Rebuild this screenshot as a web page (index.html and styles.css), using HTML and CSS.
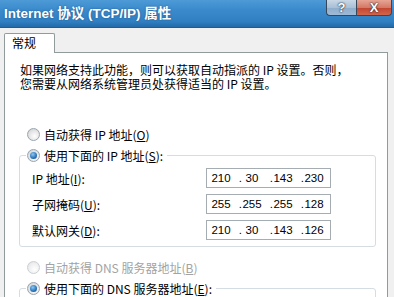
FILE: index.html
```html
<!DOCTYPE html>
<html lang="zh-CN">
<head>
<meta charset="utf-8">
<title>Internet 协议 (TCP/IP) 属性</title>
<link rel="stylesheet" href="styles.css">
</head>
<body>
<div class="window">
  <div class="titlebar">
    <span class="title">Internet 协议 (TCP/IP) 属性</span>
    <div class="caption-btns">
      <span class="cbtn help">?</span>
      <span class="cbtn close">X</span>
    </div>
  </div>
  <div class="client">
    <div class="tabs"><div class="tab">常规</div></div>
    <div class="panel">
      <p class="intro">如果网络支持此功能，则可以获取自动指派的 IP 设置。否则，<br>您需要从网络系统管理员处获得适当的 IP 设置。</p>
      <div class="radio-row first"><span class="radio"></span><span>自动获得 IP 地址(<u>O</u>)</span></div>
      <fieldset class="group">
        <legend><span class="radio-row"><span class="radio checked"></span><span>使用下面的 IP 地址(<u>S</u>):</span></span></legend>
        <div class="rows">
          <div class="field-row"><span class="lbl">IP 地址(<u>I</u>):</span>
            <div class="ipbox"><span class="seg">210</span><span class="dot">.</span><span class="seg">30</span><span class="dot">.</span><span class="seg">143</span><span class="dot">.</span><span class="seg">230</span></div></div>
          <div class="field-row"><span class="lbl">子网掩码(<u>U</u>):</span>
            <div class="ipbox"><span class="seg">255</span><span class="dot">.</span><span class="seg">255</span><span class="dot">.</span><span class="seg">255</span><span class="dot">.</span><span class="seg">128</span></div></div>
          <div class="field-row"><span class="lbl">默认网关(<u>D</u>):</span>
            <div class="ipbox"><span class="seg">210</span><span class="dot">.</span><span class="seg">30</span><span class="dot">.</span><span class="seg">143</span><span class="dot">.</span><span class="seg">126</span></div></div>
        </div>
      </fieldset>
      <div class="radio-row second disabled"><span class="radio"></span><span>自动获得 DNS 服务器地址(<u>B</u>)</span></div>
      <fieldset class="group dns">
        <legend><span class="radio-row"><span class="radio checked"></span><span>使用下面的 DNS 服务器地址(<u>E</u>):</span></span></legend>
      </fieldset>
    </div>
  </div>
</div>
</body>
</html>
```

FILE: styles.css
```css
html, body {
  margin: 0;
  padding: 0;
}
body {
  background: #f0f0f0;
  font-family: "Noto Sans CJK SC", "Liberation Sans", sans-serif;
  font-size: 12px;
  color: #000;
  overflow: hidden;
}
.window {
  width: 394px;
  height: 297px;
  overflow: hidden;
}
.titlebar {
  height: 28px;
  display: flex;
  align-items: flex-start;
  background: linear-gradient(#4d9ad6 0%, #3b8bcc 35%, #2f7fc2 80%, #236aa8 100%);
  border-bottom: 1px solid #1d5d96;
  box-sizing: border-box;
}
.title {
  padding-left: 4px;
  line-height: 27px;
  font-family: "Liberation Sans", "Noto Sans CJK SC", sans-serif;
  font-weight: bold;
  font-size: 13.5px;
  color: #fff;
  text-shadow: 0 0 2px rgba(0, 30, 70, 0.45);
  white-space: nowrap;
}
.caption-btns {
  margin-left: auto;
  margin-right: 2px;
  display: flex;
}
.cbtn {
  height: 16px;
  box-sizing: border-box;
  border: 1px solid #37475a;
  border-top: none;
  display: flex;
  align-items: center;
  justify-content: center;
  font-family: "Liberation Sans", sans-serif;
  font-weight: bold;
  font-size: 13px;
  color: #fff;
  text-shadow: 0 0 1px #1e2a38, 0 0 2px #1e2a38;
}
.help {
  width: 30px;
  border-right: none;
  border-radius: 0 0 0 4px;
  background: linear-gradient(#c9d8e6, #a9c0d6 50%, #8eaccb 51%, #9fbad6);
}
.close {
  width: 36px;
  border-radius: 0 0 4px 0;
  background: linear-gradient(#e7a593, #d47a66 50%, #c1452f 51%, #d2654c);
}
.client {
  padding: 5px 6px 0 4px;
}
.tabs {
  display: flex;
}
.tab {
  position: relative;
  z-index: 1;
  width: 51px;
  height: 20px;
  box-sizing: border-box;
  margin-bottom: -1px;
  border: 1px solid #919b9c;
  border-bottom: none;
  border-radius: 2px 2px 0 0;
  background: #fff;
  padding-left: 7px;
  line-height: 18px;
}
.panel {
  border: 1px solid #919b9c;
  background: #fff;
  min-height: 300px;
}
.intro {
  margin: 10px 0 0 15px;
  line-height: 14px;
  white-space: nowrap;
}
.radio-row {
  display: flex;
  align-items: center;
  gap: 4px;
  height: 21px;
  white-space: nowrap;
}
.radio-row.first {
  margin-top: 33px;
  padding-left: 22px;
}
.radio-row.second {
  margin-top: 10px;
  padding-left: 22px;
}
.radio-row.disabled {
  color: #a3a3a3;
}
.radio {
  width: 13px;
  height: 13px;
  box-sizing: border-box;
  border-radius: 50%;
  border: 1px solid #97a5b0;
  background: radial-gradient(circle at 60% 65%, #ffffff 0%, #e4e4e4 55%, #c9c9c9 100%);
  display: flex;
  align-items: center;
  justify-content: center;
  flex: none;
}
.disabled .radio {
  border-color: #c9cfd3;
  background: radial-gradient(circle at 60% 65%, #ffffff 0%, #eeeeee 60%, #dddddd 100%);
}
.radio.checked::after {
  content: "";
  width: 7px;
  height: 7px;
  border-radius: 50%;
  background: radial-gradient(circle at 40% 35%, #8cc8f2 0%, #2f79c0 55%, #153f78 100%);
}
.group {
  margin: 0 11px 0 14px;
  padding: 0 6px 6px 6px;
  border: 1px solid #d5dde3;
  border-radius: 3px;
  min-width: 0;
}
.group.dns {
  min-height: 60px;
}
.group legend {
  padding: 0 4px 0 1px;
}
.rows {
  display: flex;
  flex-direction: column;
  gap: 6px;
  margin-top: 2px;
}
.field-row {
  display: grid;
  grid-template-columns: 174px 125px;
  align-items: center;
  height: 20px;
  margin-left: 6px;
}
.lbl {
  white-space: nowrap;
}
.ipbox {
  height: 20px;
  box-sizing: border-box;
  border: 1px solid #a5acb2;
  display: flex;
  align-items: center;
  padding-left: 4px;
  font-family: "Liberation Sans", sans-serif;
  font-size: 11.5px;
}
.seg {
  width: 20px;
  text-align: center;
}
.dot {
  width: 11px;
  text-align: right;
}
u {
  text-decoration: underline;
  text-underline-offset: 1px;
}
```
